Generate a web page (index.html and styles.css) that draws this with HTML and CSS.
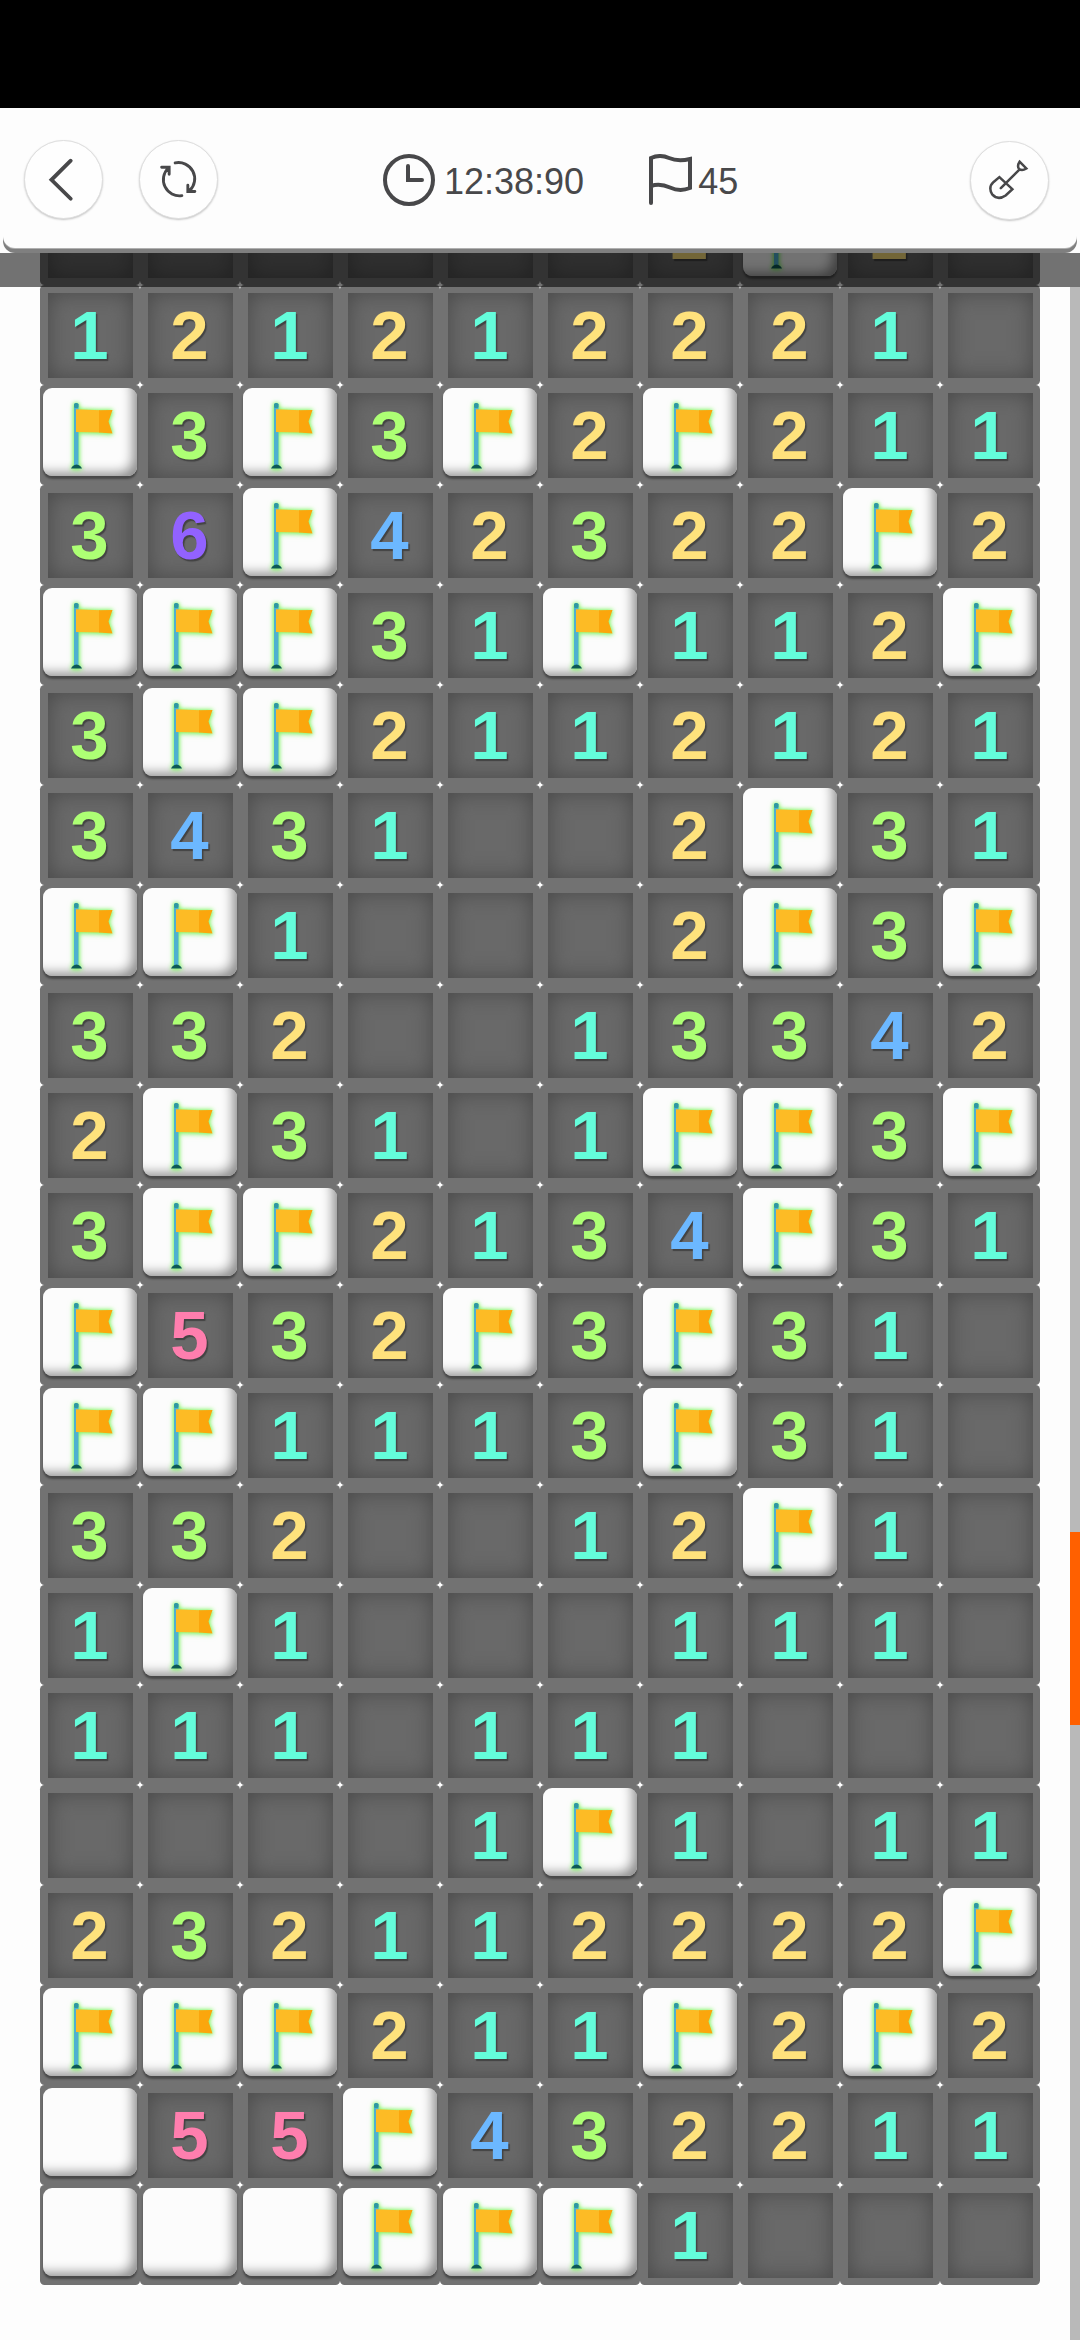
FILE: index.html
```html
<!DOCTYPE html>
<html lang="en">
<head>
<meta charset="utf-8">
<title>Minesweeper</title>
<link rel="stylesheet" href="styles.css">
</head>
<body>
<svg class="defs" width="0" height="0" aria-hidden="true">
  <symbol id="flag" viewBox="0 0 94 88">
    <rect x="31" y="16" width="4.500" height="64" fill="#4fb0d0"/>
    <rect x="31" y="15" width="4.500" height="5" rx="1.500" fill="#2f98a2"/>
    <path d="M28 80.500Q29.500 77 33.500 76.500Q37.500 77 39 80.500Z" fill="#0d5a55"/>
    <path d="M33 21.300L57 22.300V44.500L33 44Z" fill="#fdbb25"/>
    <path d="M56 22.300L69.500 22L65.500 33.500L69.500 45.500L56 44.500Z" fill="#fba60d"/>
  </symbol>
</svg>
<div class="status-bar"></div>
<header class="toolbar">
  <button class="round back" aria-label="Back">
    <svg viewBox="0 0 80 80"><path d="M47.500 20.500L27.500 40.300L47.500 60" stroke-width="4"/></svg>
  </button>
  <button class="round restart" aria-label="Restart">
    <svg viewBox="0 0 80 80">
      <path d="M36.500 22.800A16.800 16.800 0 0 1 51.500 51.500M43.500 56.800A16.800 16.800 0 0 1 29.500 28M22.500 27.300H30.300V34.500M57 52.500H49.700V46" stroke-width="3"/>
    </svg>
  </button>
  <div class="stat time">
    <svg width="52" height="52" viewBox="0 0 52 52"><circle cx="26" cy="26" r="24"/><path d="M25 12V26H39"/></svg>
    <span>12:38:90</span>
  </div>
  <div class="stat flags">
    <svg width="46" height="52" viewBox="0 0 46 52"><path d="M4 49V4Q13 0 22 4T43 5V34Q33 38 23 33.500T4 32"/></svg>
    <span>45</span>
  </div>
  <button class="round dig" aria-label="Dig">
    <svg viewBox="0 0 80 80">
      <path d="M31 48L50.500 28.500M29.500 36.500L43 49L36 55.500Q28 61 22 54.500Q17.500 47 23.500 41.500ZM50.500 20.500L57.500 27.500Q53 30.500 50 28Q47.500 25 50.500 20.500Z" stroke-width="2.600"/>
    </svg>
  </button>
</header>
<main class="viewport">
  <div class="board" id="board"></div>
  <div class="scroll-track"><div class="scroll-thumb"></div></div>
  <div class="shade"></div>
</main>
<script src="board.js"></script>
</body>
</html>
```
FILE: styles.css
```css
* { box-sizing: border-box; }
body {
  margin: 0;
  width: 1080px;
  height: 2340px;
  overflow: hidden;
  background: #fdfdfd;
  color: #48484a;
  font-family: "Liberation Sans", Arial, sans-serif;
}
.defs { position: absolute; }
.status-bar { height: 108px; background: #000; }

.toolbar {
  display: flex;
  align-items: center;
  height: 140px;
  margin: 0 3px 1px;
  padding: 4px 28px 0 21px;
  background: #fdfdfd;
  border-radius: 0 0 12px 12px;
  box-shadow: 0 1px 0 #b0b0b0, 0 5px 0 #7f7f7f;
  position: relative;
  z-index: 2;
}
.round {
  flex: none;
  width: 79px;
  height: 79px;
  padding: 0;
  border: 1px solid #dedede;
  border-radius: 50%;
  background: #fefefe;
  box-shadow: 0 1px 2px rgba(0, 0, 0, .22);
}
.round svg { display: block; width: 77px; height: 77px; }
.toolbar svg { fill: none; stroke: #48484a; stroke-width: 4; stroke-linecap: round; stroke-linejoin: miter; }
.back { margin-top: -1px; }
.restart { margin: -2px 0 0 36px; }
.dig { margin-left: auto; }
.stat { display: flex; align-items: center; height: 52px; font-size: 36px; line-height: 52px; }
.stat span { padding-top: 3px; }
.time { gap: 9px; margin-left: 165px; }
.flags { gap: 5px; margin-left: 63px; }

.viewport {
  display: flex;
  justify-content: space-between;
  position: relative;
  height: 2091px;
  padding-left: 40px;
  overflow: hidden;
}
.board {
  display: grid;
  grid-template-columns: repeat(10, 100px);
  grid-auto-rows: 100px;
  height: 2100px;
  margin-top: -64px;
  background: #fff;
}
.cell {
  padding: 8px;
  border-radius: 4.5px;
  background: #727272;
}
.open {
  width: 85px;
  height: 85px;
  padding-right: 2px;
  background: #696969;
  box-shadow: inset 0 0 22px #484848;
  font-size: 69px;
  font-weight: 700;
  line-height: 86px;
  text-align: center;
  text-shadow: 1.5px 1.5px 1px rgba(30, 30, 30, .5);
}
.n1 { color: #64fddb; }
.n2 { color: #ffe27c; }
.n3 { color: #adff74; }
.n4 { color: #6cb8ff; }
.n5 { color: #ff7eae; }
.n6 { color: #9262ff; }
.covered { padding: 3px; }
.tile {
  width: 94px;
  height: 88px;
  border-radius: 9px;
  background: #fcfcfc;
  box-shadow: inset -9px -8px 12px -5px #8c8c8c, 0 3px 2px rgba(50, 50, 50, .65);
}
.tile svg {
  display: block;
  width: 94px;
  height: 88px;
  filter: drop-shadow(0 0 2px #7cfb5c) drop-shadow(0 1px 2px rgba(110, 235, 80, .6));
}

.scroll-track { width: 10px; background: #b9b9b9; padding-top: 1283px; }
.scroll-thumb { height: 193px; background: #ff6000; }
.shade {
  position: absolute;
  inset: 0 0 auto 0;
  height: 38px;
  background: rgba(0, 0, 0, .55);
}
.shade::after {
  content: "";
  position: absolute;
  right: 0;
  width: 10px;
  height: 38px;
  background: #727272;
}
.viewport::before {
  content: "";
  position: absolute;
  inset: 0 0 auto 0;
  z-index: 1;
  height: 4px;
  background: #fdfdfd;
}
```
FILE: board.js
```javascript
// F: flagged, U: covered, dot: empty, digit: neighbouring mines
const rows = [
  "......2F2.",
  "121212221.",
  "F3F3F2F211",
  "36F42322F2",
  "FFF31F112F",
  "3FF2112121",
  "3431..2F31",
  "FF1...2F3F",
  "332..13342",
  "2F31.1FF3F",
  "3FF2134F31",
  "F532F3F31.",
  "FF1113F31.",
  "332..12F1.",
  "1F1...111.",
  "111.111...",
  "....1F1.11",
  "232112222F",
  "FFF211F2F2",
  "U55F432211",
  "UUUFFF1..."
];
const cellHtml = (c) => {
  if (c === "F") return '<div class="cell covered"><div class="tile"><svg><use href="#flag"/></svg></div></div>';
  if (c === "U") return '<div class="cell covered"><div class="tile"></div></div>';
  if (c === ".") return '<div class="cell"><div class="open"></div></div>';
  return `<div class="cell"><div class="open n${c}">${c}</div></div>`;
};
document.getElementById("board").innerHTML = rows.map((r) => [...r].map(cellHtml).join("")).join("");
```
